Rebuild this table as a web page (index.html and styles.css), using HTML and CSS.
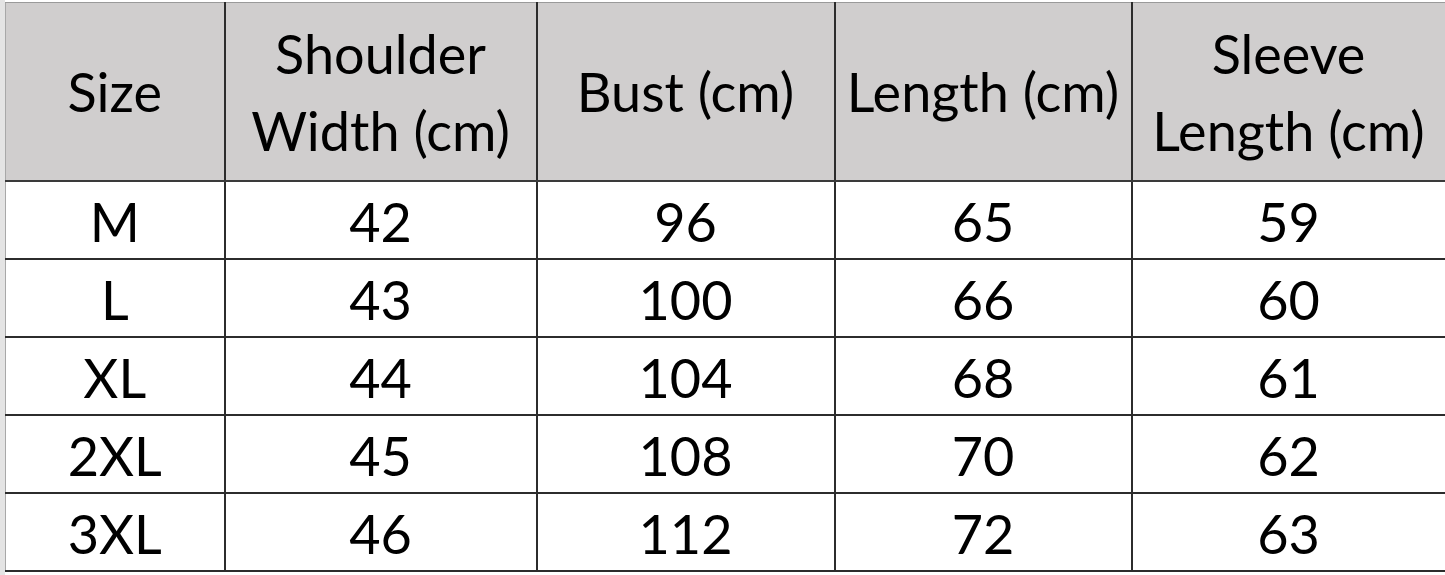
FILE: index.html
```html
<!DOCTYPE html>
<html>
<head>
<meta charset="utf-8">
<link rel="stylesheet" href="styles.css">
</head>
<body>
<div class="sheet">
  <table class="chart">
    <colgroup>
      <col class="c-size">
      <col class="c-shoulder">
      <col class="c-bust">
      <col class="c-length">
      <col class="c-sleeve">
    </colgroup>
    <thead>
      <tr>
        <th>Size</th>
        <th>Shoulder<br>Width (cm)</th>
        <th>Bust (cm)</th>
        <th>Length (cm)</th>
        <th>Sleeve<br>Length (cm)</th>
      </tr>
    </thead>
    <tbody>
      <tr><td>M</td><td>42</td><td>96</td><td>65</td><td>59</td></tr>
      <tr><td>L</td><td>43</td><td>100</td><td>66</td><td>60</td></tr>
      <tr><td>XL</td><td>44</td><td>104</td><td>68</td><td>61</td></tr>
      <tr><td>2XL</td><td>45</td><td>108</td><td>70</td><td>62</td></tr>
      <tr><td>3XL</td><td>46</td><td>112</td><td>72</td><td>63</td></tr>
    </tbody>
  </table>
</div>
</body>
</html>
```

FILE: styles.css
```css
html, body {
  margin: 0;
  padding: 0;
  background: #ffffff;
}

.sheet {
  padding-top: 2px;
  padding-left: 5px;
  background: linear-gradient(to right, #e4e4e4 0, #e4e4e4 5px, #ffffff 5px);
  width: 1445px;
  height: 575px;
  box-sizing: border-box;
  overflow: hidden;
}

.chart {
  border-collapse: collapse;
  table-layout: fixed;
  width: 1440px;
  font-family: Lato, "Liberation Sans", sans-serif;
  font-size: 54px;
  color: #000000;
}

.c-size { width: 219px; }
.c-shoulder { width: 312px; }
.c-bust { width: 298px; }
.c-length { width: 297px; }
.c-sleeve { width: 314px; }

.chart th {
  background: #d0cece;
  font-weight: normal;
  height: 177px;
  line-height: 77px;
  padding: 0;
  text-align: center;
  vertical-align: middle;
  border-top: 1px solid #9a9a9a;
  border-left: 2px solid #2c2c2c;
  border-right: 2px solid #2c2c2c;
  border-bottom: 2px solid #3a3a3a;
}

.chart th:first-child {
  border-left: 1px solid #a8a8a8;
}

.chart td {
  height: 78px;
  padding: 4px 0 0;
  text-align: center;
  vertical-align: middle;
  border: 2px solid #2c2c2c;
  box-sizing: border-box;
  line-height: 60px;
}

.chart td:first-child {
  border-left: 1px solid #a8a8a8;
}
```
